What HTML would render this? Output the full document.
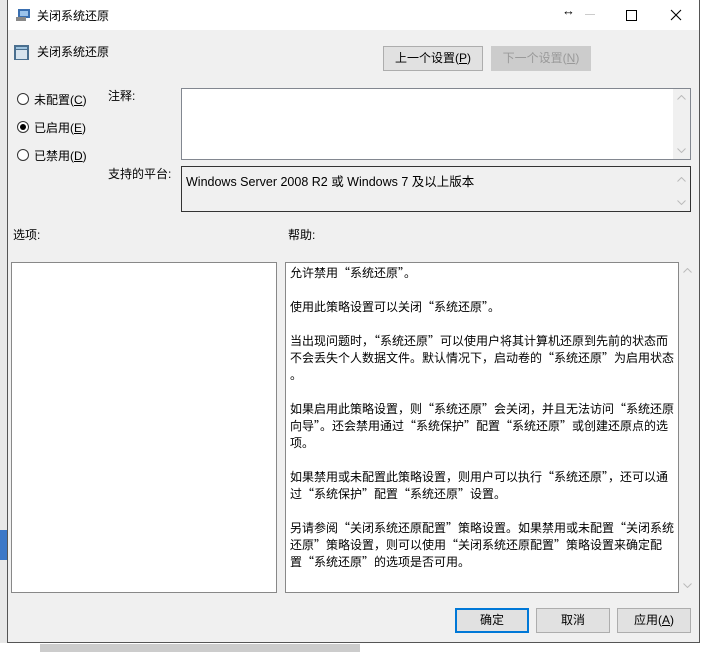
<!DOCTYPE html>
<html><head><meta charset="utf-8"><style>
body{margin:0;width:708px;height:652px;position:relative;overflow:hidden;background:#f0f0f0;font-family:"Liberation Sans","Noto Sans CJK SC",sans-serif;font-size:12px;color:#000}
.a{position:absolute}
.win{left:7px;top:0;width:693px;height:643px;background:#f0f0f0;border:1px solid #555;border-top:none;box-sizing:border-box}
.box{position:absolute;background:#fff;border:1px solid #828790;box-sizing:border-box}
.btn{position:absolute;height:25px;background:#e1e1e1;border:1px solid #adadad;box-sizing:border-box;text-align:center;line-height:23px;font-size:12px}
.rad{position:absolute;width:12px;height:12px;border:1px solid #333;border-radius:50%;box-sizing:border-box;background:#fff}
.help{font-family:"Noto Sans CJK SC",sans-serif}
.help p{margin:0 0 17px 0}
</style></head><body>
<div class="a" style="left:0;top:0;width:7px;height:652px;background:#e8e8e8"></div>
<div class="a" style="left:0;top:530px;width:7px;height:30px;background:#3c78c8"></div>
<div class="a" style="left:700px;top:0;width:8px;height:652px;background:#fff"></div>
<div class="a" style="left:0;top:643px;width:708px;height:9px;background:#fff"></div>
<div class="a" style="left:40px;top:644px;width:320px;height:8px;background:#ccc"></div>
<div class="win a"></div>
<div class="a" style="left:8px;top:0;width:691px;height:30px;background:#fff"></div>
<svg class="a" style="left:16px;top:8px" width="16" height="14"><rect x="2" y="1" width="12" height="9" fill="#3a6fb0"/><rect x="4" y="3" width="8" height="5" fill="#9cc3ea"/><rect x="0" y="9" width="10" height="4" fill="#888"/></svg>
<div class="a" style="left:37px;top:7px">关闭系统还原</div>
<div class="a" style="left:562px;top:3px;font-size:13px">↔</div>
<div class="a" style="left:585px;top:14px;width:10px;height:1px;background:#ccc"></div>
<div class="a" style="left:626px;top:10px;width:9px;height:9px;border:1px solid #000"></div>
<svg class="a" style="left:670px;top:9px" width="12" height="12"><path d="M1 1L11 11M11 1L1 11" stroke="#000" stroke-width="1.1"/></svg>
<svg class="a" style="left:14px;top:45px" width="16" height="16"><rect x="0" y="0" width="15" height="15" fill="#4a6f8f"/><rect x="2" y="5" width="11" height="9" fill="#d8e4ee"/><rect x="2" y="2" width="11" height="2" fill="#9fc4e0"/></svg>
<div class="a" style="left:37px;top:43px">关闭系统还原</div>
<div class="btn" style="left:383px;top:46px;width:100px">上一个设置(<u>P</u>)</div>
<div class="btn" style="left:491px;top:46px;width:100px;background:#ccc;border-color:#ccc;color:#9a9a9a">下一个设置(<u>N</u>)</div>
<div class="rad" style="left:17px;top:93px"></div><div class="a" style="left:34px;top:91px">未配置(<u>C</u>)</div>
<div class="rad" style="left:17px;top:121px"></div><div class="a" style="left:20px;top:124px;width:6px;height:6px;border-radius:50%;background:#000"></div><div class="a" style="left:34px;top:119px">已启用(<u>E</u>)</div>
<div class="rad" style="left:17px;top:149px"></div><div class="a" style="left:34px;top:147px">已禁用(<u>D</u>)</div>
<div class="a" style="left:108px;top:87px">注释:</div>
<div class="a" style="left:108px;top:165px">支持的平台:</div>
<div class="box" style="left:181px;top:88px;width:510px;height:72px"><div class="a" style="right:0;top:0;width:17px;height:70px;background:#f0f0f0"></div>
<svg class="a" style="right:4px;top:6px" width="9" height="5"><path d="M0.5 4.5L4.5 0.5L8.5 4.5" stroke="#bbb" fill="none"/></svg>
<svg class="a" style="right:4px;top:59px" width="9" height="5"><path d="M0.5 0.5L4.5 4.5L8.5 0.5" stroke="#bbb" fill="none"/></svg></div>
<div class="box" style="left:181px;top:166px;width:510px;height:46px;background:#f0f0f0;border-color:#333"><div class="a" style="left:4px;top:4px;font-size:12.5px">Windows Server 2008 R2 或 Windows 7 及以上版本</div>
<svg class="a" style="right:4px;top:10px" width="9" height="5"><path d="M0.5 4.5L4.5 0.5L8.5 4.5" stroke="#bbb" fill="none"/></svg>
<svg class="a" style="right:4px;top:33px" width="9" height="5"><path d="M0.5 0.5L4.5 4.5L8.5 0.5" stroke="#bbb" fill="none"/></svg></div>
<div class="a" style="left:13px;top:226px">选项:</div>
<div class="a" style="left:288px;top:226px">帮助:</div>
<div class="box" style="left:11px;top:262px;width:266px;height:331px;border-color:#888"></div>
<svg class="a" style="left:683px;top:268px" width="9" height="5"><path d="M0.5 4.5L4.5 0.5L8.5 4.5" stroke="#bbb" fill="none"/></svg>
<svg class="a" style="left:683px;top:583px" width="9" height="5"><path d="M0.5 0.5L4.5 4.5L8.5 0.5" stroke="#bbb" fill="none"/></svg>
<div class="box help" style="left:285px;top:262px;width:394px;height:331px;border-color:#888;padding:1px 2px 0 4px;line-height:17px;font-size:12px">
<p>允许禁用“系统还原”。</p>
<p>使用此策略设置可以关闭“系统还原”。</p>
<p>当出现问题时，“系统还原”可以使用户将其计算机还原到先前的状态而不会丢失个人数据文件。默认情况下，启动卷的“系统还原”为启用状态<br>。</p>
<p>如果启用此策略设置，则“系统还原”会关闭，并且无法访问“系统还原向导”。还会禁用通过“系统保护”配置“系统还原”或创建还原点的选项。</p>
<p>如果禁用或未配置此策略设置，则用户可以执行“系统还原”，还可以通过“系统保护”配置“系统还原”设置。</p>
<p>另请参阅“关闭系统还原配置”策略设置。如果禁用或未配置“关闭系统还原”策略设置，则可以使用“关闭系统还原配置”策略设置来确定配置“系统还原”的选项是否可用。</p>
</div>
<div class="btn" style="left:455px;top:608px;width:74px;border:2px solid #0078d7;line-height:21px">确定</div>
<div class="btn" style="left:536px;top:608px;width:74px">取消</div>
<div class="btn" style="left:617px;top:608px;width:74px">应用(<u>A</u>)</div>
</body></html>
